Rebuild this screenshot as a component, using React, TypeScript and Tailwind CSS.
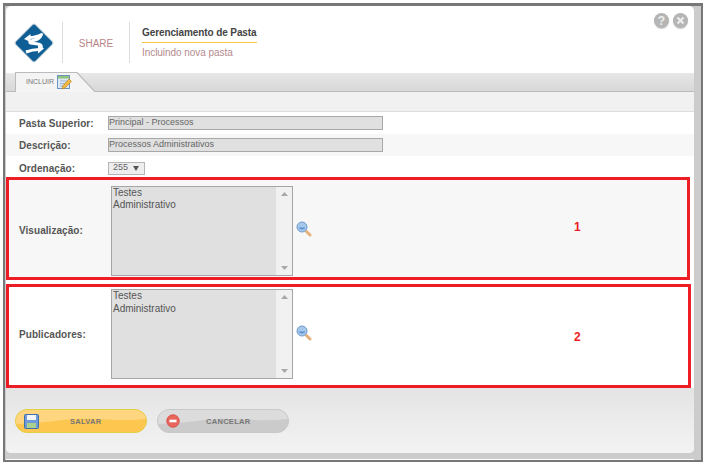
import React from 'react';

const label = 'text-[10px] font-bold text-[#555] tracking-[0.05px]';
const font = { fontFamily: '"Liberation Sans", Arial, sans-serif' };

function Logo() {
  return (
    <svg width="40" height="40" viewBox="0 0 40 40">
      <rect x="6" y="6" width="28" height="28" rx="2.500" transform="rotate(45 20 20)" fill="#0f5f96" stroke="#c9d3da" />
      <path d="M15 14.500 C20 14.500 24 13.500 27.500 11.500 C26 15.500 23 17 19 17.500 C16 18 15 19 16.500 20 L24 21 C27 21.500 28 23 27 25" fill="none" stroke="#fff" strokeWidth="3" strokeLinejoin="round" />
      <path d="M10 16 L16.500 11 L16.500 19 Z" fill="#fff" />
      <path d="M12 29 C16 27.500 20 26.500 25 26.500" fill="none" stroke="#fff" strokeWidth="3" />
      <path d="M30 25.500 L24 21.500 L24 30.500 Z" fill="#fff" />
    </svg>
  );
}

function TabIcon() {
  return (
    <svg width="15" height="15" viewBox="0 0 15 15">
      <rect x="0.500" y="0.500" width="12" height="13" fill="#dbe9f7" stroke="#6d93c4" />
      <rect x="1" y="1" width="11" height="2.500" fill="#8fc27a" />
      <path d="M3 6h7M3 8.500h7M3 11h4" stroke="#9db6d3" />
      <path d="M5 14 L6 10.500 L12 4 L14.500 6.500 L8 13 Z" fill="#f0b840" stroke="#b97f20" strokeWidth="0.600" />
    </svg>
  );
}

function Magnifier() {
  return (
    <svg width="16" height="16" viewBox="0 0 16 16">
      <path d="M10.500 10.500 L14 14" stroke="#e3b27c" strokeWidth="3" strokeLinecap="round" />
      <circle cx="6" cy="6" r="5" fill="#a6c8ec" stroke="#6f9bcb" />
      <path d="M2.500 6.500 C4 9 8 9 9.500 6.500 Z" fill="#5b90cf" />
    </svg>
  );
}

function RoundIcon({ kind }: { kind: 'help' | 'close' }) {
  return (
    <div className="flex h-[15px] w-[15px] items-center justify-center rounded-full bg-[#b5b5b5] shadow-[0_1px_1px_#ccc]">
      {kind === 'help' ? (
        <span className="text-[12px] font-bold leading-none text-[#eee]">?</span>
      ) : (
        <svg width="11" height="11" viewBox="0 0 11 11">
          <path d="M2.500 2.500 L8.500 8.500 M8.500 2.500 L2.500 8.500" stroke="#eee" strokeWidth="2.200" />
        </svg>
      )}
    </div>
  );
}

function ListBox() {
  return (
    <div className="flex h-[90px] w-[182px] border border-[#a5a5a5] bg-[#e0e0e0] text-[10px] leading-[12.500px] text-[#555]">
      <div className="flex-1 pl-[1px]">
        <div>Testes</div>
        <div>Administrativo</div>
      </div>
      <div className="flex w-4 flex-col items-center justify-between bg-[#f1f1f1] py-[5px] text-[#a8a8a8]">
        <svg width="7" height="4" viewBox="0 0 7 4"><path d="M0 4 L3.500 0 L7 4 Z" fill="currentColor" /></svg>
        <svg width="7" height="4" viewBox="0 0 7 4"><path d="M0 0 L7 0 L3.500 4 Z" fill="currentColor" /></svg>
      </div>
    </div>
  );
}

function Row({ title, value, bg }: { title: string; value: string; bg: string }) {
  return (
    <div className={`flex h-[22px] shrink-0 items-center ${bg}`}>
      <div className={`w-[102px] pl-[13px] ${label}`}>{title}</div>
      <div className="flex h-[14px] w-[275px] items-center border border-[#a8a8a8] bg-[#e0e0e0] text-[9px] text-[#666]">
        {value}
      </div>
    </div>
  );
}

function GroupBox({ title, num, bg, className, inner, iconClass, numClass }: {
  title: string;
  num: string;
  bg: string;
  className: string;
  inner: string;
  iconClass: string;
  numClass: string;
}) {
  return (
    <div className={`flex items-center border-[3px] border-[#ee1c25] ${bg} ${inner} ${className}`}>
      <div className={`w-[102px] pl-[10px] ${label}`}>{title}</div>
      <ListBox />
      <div className={`ml-[3px] ${iconClass}`}><Magnifier /></div>
      <div className={`ml-[262px] text-[12px] font-bold text-[#ee1c25] ${numClass}`}>{num}</div>
    </div>
  );
}

export default function App() {
  return (
    <div className="h-[462px] w-[706px] overflow-hidden bg-white px-[3px] pt-[3px]" style={font}>
      <div className="h-full w-full border-x-2 border-t-[3px] border-b-2 border-[#777] bg-[#ccc] pl-[1px] pr-[7px]">
        <div className="h-full border-b border-white pb-[6px]">
          <div className="flex h-full flex-col overflow-hidden rounded-[5px] bg-white">
            <div className="flex h-[67px] shrink-0">
              <div className="flex w-[56px] items-center justify-center pt-[7px]">
                <Logo />
              </div>
              <div className="mt-[16px] h-[41px] w-px bg-[#ddd]" />
              <div className="flex w-[66px] items-center justify-center pt-[7px] text-[10px] text-[#b78488]">SHARE</div>
              <div className="mt-[16px] h-[41px] w-px bg-[#ddd]" />
              <div className="ml-[12px] pt-[20px]">
                <div className="border-b border-[#f8c548] pb-[2px] text-[10px] font-bold leading-[14px] tracking-[-0.1px] text-[#444]">
                  Gerenciamento de Pasta
                </div>
                <div className="pt-[3px] text-[10px] leading-[14px] tracking-[-0.05px] text-[#b48a8e]">Incluindo nova pasta</div>
              </div>
              <div className="ml-auto mr-[6px] mt-[7px] flex gap-[4px]">
                <RoundIcon kind="help" />
                <RoundIcon kind="close" />
              </div>
            </div>

            <div className="relative h-[19px] shrink-0 border-y border-t-[#e8e8e8] border-b-[#bbb] bg-gradient-to-b from-[#e6e6e6] to-[#d8d8d8]">
              <div className="absolute bottom-[-1px] left-[9px] h-[20px] w-[81px] bg-[#bbb] [clip-path:polygon(0_0,77%_0,100%_100%,0_100%)]">
                <div className="flex h-full w-full items-center gap-[3px] bg-[#f4f4f4] pl-[11px] text-[7px] text-[#777] [clip-path:polygon(1px_1px,76%_1px,98%_100%,1px_100%)]">
                  INCLUIR
                  <TabIcon />
                </div>
              </div>
            </div>

            <div className="h-[20px] shrink-0 border-b border-[#ddd] bg-[#f1f1f1]" />

            <Row title="Pasta Superior:" value="Principal - Processos" bg="bg-white" />
            <Row title="Descrição:" value="Processos Administrativos" bg="bg-[#f7f7f7]" />
            <div className="flex h-[21px] shrink-0 items-center bg-white pt-[3px]">
              <div className={`w-[102px] pl-[13px] ${label}`}>Ordenação:</div>
              <div className="flex h-[13px] w-[37px] items-center gap-[5px] border border-[#b5b5b5] bg-[#eee] pl-[4px] text-[9px] text-[#666]">
                255
                <svg width="6" height="5" viewBox="0 0 6 5"><path d="M0 0 L6 0 L3 5 Z" fill="#555" /></svg>
              </div>
            </div>

            <GroupBox
              title="Visualização:"
              num="1"
              bg="bg-[#f7f7f7]"
              className="h-[103px] w-[684px] shrink-0"
              inner="pt-[4px]"
              iconClass="mb-[4px]"
              numClass="mb-[8px]"
            />
            <div className="h-[4px] shrink-0 bg-white" />
            <GroupBox
              title="Publicadores:"
              num="2"
              bg="bg-white"
              className="h-[104px] w-[685px] shrink-0"
              inner="pb-[4px]"
              iconClass="mb-[3px]"
              numClass="mt-[5px]"
            />

            <div className="flex flex-1 items-start gap-[10px] bg-gradient-to-b from-[#e4e4e4] to-[#f3f3f3] pl-[9px] pt-[21px]">
              <button className="relative flex h-[24px] w-[132px] items-center overflow-hidden rounded-full border border-[#e3cf45] bg-[#fdc64e] pl-[8px]">
                <svg className="absolute left-0 top-0" width="130" height="22" viewBox="0 0 130 22">
                  <path d="M0 0 H130 V9 C100 12 80 8 60 9 C40 10 30 13 0 14 Z" fill="#fdd67f" />
                </svg>
                <svg className="relative" width="15" height="15" viewBox="0 0 15 15">
                  <rect x="0.500" y="0.500" width="14" height="14" rx="1" fill="#6d9bd8" stroke="#3f6ea8" />
                  <rect x="3" y="1" width="9" height="5" fill="#f2f6fb" />
                  <rect x="3" y="9" width="9" height="5" fill="#a9d08e" />
                </svg>
                <span className="relative top-[1px] ml-[31px] text-[7.500px] font-bold tracking-[0.3px] text-[#777]">SALVAR</span>
              </button>
              <button className="relative flex h-[24px] w-[132px] items-center overflow-hidden rounded-full border border-[#c8c8c8] bg-[#cbcbcb] pl-[8px]">
                <svg className="absolute left-0 top-0" width="130" height="22" viewBox="0 0 130 22">
                  <path d="M0 0 H130 V9 C100 12 80 8 60 9 C40 10 30 13 0 14 Z" fill="#dcdcdc" />
                </svg>
                <svg className="relative" width="14" height="14" viewBox="0 0 14 14">
                  <circle cx="7" cy="7" r="6.200" fill="#e8675c" stroke="#d94f45" />
                  <rect x="3.500" y="5.700" width="7" height="2.600" fill="#fff" />
                </svg>
                <span className="relative top-[1px] ml-[26px] text-[7.500px] font-bold tracking-[0.3px] text-[#777]">CANCELAR</span>
              </button>
            </div>
          </div>
        </div>
      </div>
    </div>
  );
}
